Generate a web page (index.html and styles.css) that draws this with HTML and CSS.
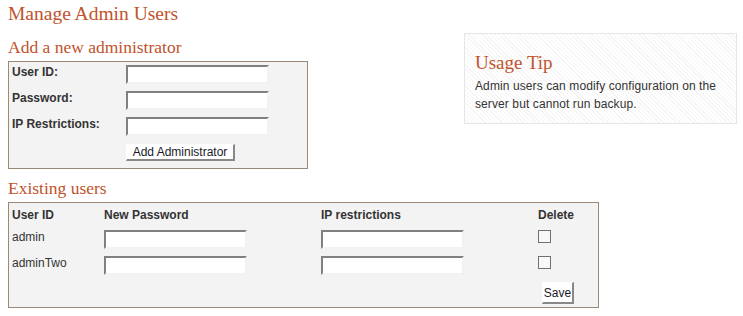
FILE: index.html
```html
<!DOCTYPE html>
<html>
<head>
<meta charset="utf-8">
<title>Manage Admin Users</title>
<link rel="stylesheet" href="styles.css">
</head>
<body>
<h1 class="page-title">Manage Admin Users</h1>
<div class="top-row">
  <section class="add-section">
    <h2 class="section-title">Add a new administrator</h2>
    <form class="panel add-form">
      <label class="field-label">User ID:</label>
      <input class="text-input" type="text">
      <label class="field-label">Password:</label>
      <input class="text-input" type="password">
      <label class="field-label">IP Restrictions:</label>
      <input class="text-input" type="text">
      <span></span>
      <button class="btn btn-add" type="button">Add Administrator</button>
    </form>
  </section>
  <aside class="tip">
    <h3 class="tip-title">Usage Tip</h3>
    <p class="tip-text">Admin users can modify configuration on the server but cannot run backup.</p>
  </aside>
</div>
<section class="existing-section">
  <h2 class="section-title existing-title">Existing users</h2>
  <form class="panel users-grid">
    <div class="col-head">User ID</div>
    <div class="col-head">New Password</div>
    <div class="col-head">IP restrictions</div>
    <div class="col-head">Delete</div>

    <div class="cell">admin</div>
    <div class="cell"><input class="text-input" type="password"></div>
    <div class="cell"><input class="text-input" type="text"></div>
    <div class="cell"><input class="check" type="checkbox"></div>

    <div class="cell">adminTwo</div>
    <div class="cell"><input class="text-input" type="password"></div>
    <div class="cell"><input class="text-input" type="text"></div>
    <div class="cell"><input class="check" type="checkbox"></div>

    <div class="cell"></div>
    <div class="cell"></div>
    <div class="cell"></div>
    <div class="cell save-cell"><button class="btn btn-save" type="button">Save</button></div>
  </form>
</section>
</body>
</html>
```
FILE: styles.css
```css
html, body {
  background: #ffffff;
}
body {
  margin: 3px 6px 0 8px;
  font-family: "Liberation Sans", Arial, sans-serif;
  font-size: 12px;
  color: #333333;
}
.page-title {
  margin: 0;
  font-family: "Liberation Serif", "Times New Roman", serif;
  font-weight: normal;
  font-size: 19.5px;
  line-height: 22px;
  color: #c0532c;
}
.top-row {
  display: flex;
  justify-content: space-between;
  align-items: flex-start;
}
.add-section {
  width: 300px;
}
.section-title {
  margin: 12px 0 4px;
  font-family: "Liberation Serif", "Times New Roman", serif;
  font-weight: normal;
  font-size: 17.5px;
  line-height: 20px;
  color: #c0532c;
}
.existing-title {
  margin-top: 9px;
}
.panel {
  margin: 0;
  box-sizing: border-box;
  border: 1px solid #9a8878;
  background: #f3f3f3;
}
.add-form {
  width: 300px;
  height: 108px;
  display: grid;
  grid-template-columns: 114px 143px;
  grid-auto-rows: min-content;
  row-gap: 7px;
  align-items: start;
  padding: 3px 3px 0 3px;
}
.field-label {
  font-weight: bold;
  line-height: 14px;
  color: #333333;
}
.text-input {
  box-sizing: border-box;
  display: block;
  width: 143px;
  height: 19px;
  margin: 0;
  padding: 1px 2px;
  border: 2px solid;
  border-color: #808080 #f2f2f2 #f2f2f2 #808080;
  background: #ffffff;
  font-family: "Liberation Sans", Arial, sans-serif;
  font-size: 12px;
  outline: none;
}
.btn {
  box-sizing: border-box;
  margin: 0;
  padding: 0;
  background: #ffffff;
  border-style: solid;
  border-width: 1px 2px 2px 1px;
  border-color: #ffffff #888888 #888888 #ffffff;
  font-family: "Liberation Sans", Arial, sans-serif;
  font-size: 12px;
  color: #1a1a2a;
}
.btn-add {
  width: 109px;
  height: 17px;
  margin-top: 1px;
  line-height: 13px;
}
.tip {
  box-sizing: border-box;
  width: 273px;
  height: 91px;
  margin-top: 8px;
  padding: 18px 10px 0 10px;
  border: 1px solid #e6e6e6;
  background: repeating-linear-gradient(45deg, #ffffff 0px, #ffffff 2px, #f5f5f5 2px, #f5f5f5 3px);
}
.tip-title {
  margin: 0 0 3px;
  font-family: "Liberation Serif", "Times New Roman", serif;
  font-weight: normal;
  font-size: 19px;
  line-height: 22px;
  color: #c0532c;
}
.tip-text {
  margin: 0;
  line-height: 18px;
  letter-spacing: 0.1px;
  color: #333333;
}
.users-grid {
  width: 591px;
  height: 106px;
  display: grid;
  grid-template-columns: 92px 217px 217px 36px;
  grid-template-rows: 15px 19px 19px 22px;
  row-gap: 7px;
  align-items: start;
  padding: 5px 3px 0 3px;
}
.col-head {
  font-weight: bold;
  line-height: 14px;
  color: #333333;
}
.cell {
  line-height: 14px;
}
.check {
  -webkit-appearance: none;
  appearance: none;
  display: block;
  box-sizing: border-box;
  width: 13px;
  height: 13px;
  margin: 0;
  border: 1px solid #707070;
  background: #f8f8f8;
}
.save-cell {
  display: flex;
  justify-content: flex-end;
}
.btn-save {
  width: 32px;
  height: 22px;
  line-height: 18px;
}
```
